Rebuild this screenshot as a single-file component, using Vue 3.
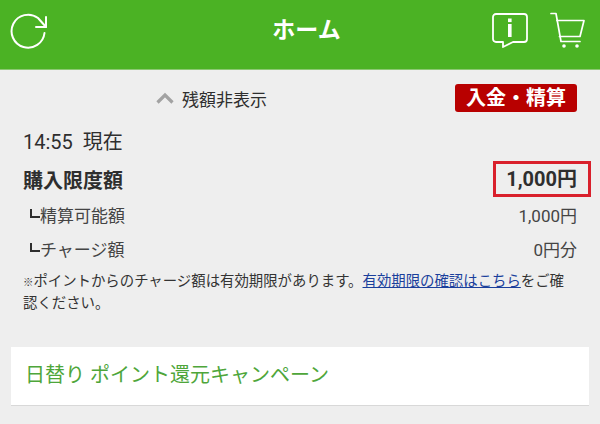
<template>
  <div class="screen">
    <header class="app-bar">
      <svg class="icon-reload" width="40" height="40" viewBox="0 0 40 40" fill="none" stroke="#fff" stroke-width="2" stroke-linecap="round" stroke-linejoin="round">
        <path d="M34.5 22 A16.5 16.5 0 1 1 28 7 L36 16" />
        <path d="M36 6 L36 16 L26 16" />
      </svg>
      <h1 class="title">ホーム</h1>
      <div class="bar-actions">
        <svg width="37" height="36" viewBox="0 0 37 36" fill="none" stroke="#fff" stroke-width="1.8" stroke-linejoin="round">
          <path d="M5 2 H33 A3 3 0 0 1 36 5 V27 A3 3 0 0 1 33 30 H22 L12 35 V30 H5 A3 3 0 0 1 2 27 V5 A3 3 0 0 1 5 2 Z" />
          <rect x="17" y="6.5" width="3.6" height="3.6" fill="#fff" stroke="none" />
          <rect x="17" y="12" width="3.6" height="13" fill="#fff" stroke="none" />
        </svg>
        <svg width="36" height="36" viewBox="0 0 36 36" fill="none" stroke="#fff" stroke-width="1.7" stroke-linejoin="round" stroke-linecap="round">
          <path d="M1 1.5 H6 L11 29.5 H30" />
          <path d="M7 8.5 H34 L30 24.5 H9.5" />
          <circle cx="14" cy="34" r="1.8" fill="#fff" stroke="none" />
          <circle cx="27" cy="34" r="1.8" fill="#fff" stroke="none" />
        </svg>
      </div>
    </header>

    <main class="content">
      <div class="balance-toggle">
        <div class="toggle">
          <svg width="18" height="12" viewBox="0 0 18 12" fill="none" stroke="#a2a2a2" stroke-width="3.2">
            <path d="M1.5 10.5 L9 3 L16.5 10.5" />
          </svg>
          <span>残額非表示</span>
        </div>
        <button class="pay-btn">入金・精算</button>
      </div>

      <div class="time-row">14:55&nbsp; 現在</div>

      <div class="row row-main">
        <span>購入限度額</span>
        <span class="limit-box">1,000円</span>
      </div>
      <div class="row row-sub">
        <span><i class="branch"></i>精算可能額</span>
        <span>1,000円</span>
      </div>
      <div class="row row-sub">
        <span><i class="branch"></i>チャージ額</span>
        <span>0円分</span>
      </div>

      <p class="note"><span class="mark">※</span>ポイントからのチャージ額は有効期限があります。<a class="note-link">有効期限の確認はこちら</a>をご確認ください。</p>

      <div class="campaign">日替り ポイント還元キャンペーン</div>
    </main>
  </div>
</template>

<script setup>
</script>

<style>
html, body {
  margin: 0;
  background: #eeeeee;
}
</style>

<style scoped>
.screen {
  width: 600px;
  height: 424px;
  overflow: hidden;
  background: #eeeeee;
  color: #2e2e2e;
  font-family: Roboto, "Noto Sans CJK JP", sans-serif;
}

.app-bar {
  height: 70px;
  background: #4bb224;
  border-bottom: 1px solid #8cc873;
  box-sizing: border-box;
  display: flex;
  align-items: flex-start;
  justify-content: space-between;
  padding: 11px 14px 0 10px;
  position: relative;
}

.title {
  position: absolute;
  left: 13px;
  right: 0;
  top: 0;
  margin: 0;
  text-align: center;
  color: #fff;
  font-size: 23px;
  font-weight: 700;
  line-height: 62px;
}

.bar-actions {
  display: flex;
  gap: 22px;
  margin-top: 1px;
}

.content {
  padding: 14px 23px 0 23px;
}

.balance-toggle {
  display: flex;
  justify-content: space-between;
  align-items: center;
  height: 28px;
}

.toggle {
  display: flex;
  align-items: center;
  gap: 8px;
  margin-left: 133px;
  font-size: 17px;
}

.pay-btn {
  border: none;
  width: 122px;
  height: 28px;
  padding: 0;
  background: #b80000;
  color: #fff;
  border-radius: 3px;
  font: 700 20px Roboto, "Noto Sans CJK JP", sans-serif;
  line-height: 28px;
}

.time-row {
  font-size: 20px;
  line-height: 28px;
  margin-top: 16px;
}

.row {
  display: flex;
  justify-content: space-between;
  align-items: center;
}

.row-main {
  height: 36px;
  margin-top: 5px;
  font-size: 20px;
  font-weight: 700;
}

.limit-box {
  box-sizing: border-box;
  width: 98px;
  height: 36px;
  margin-right: -14px;
  line-height: 30px;
  border: 3px solid #d9202c;
  padding-right: 11px;
  text-align: right;
}

.row-sub {
  font-size: 17px;
  height: 34px;
  color: #444;
}

.branch {
  display: inline-block;
  width: 10px;
  height: 9px;
  border-left: 2.5px solid #2e2e2e;
  border-bottom: 2.5px solid #2e2e2e;
  box-sizing: border-box;
  margin: 0 0 7px 7px;
  vertical-align: middle;
}

.note {
  margin: 6px 0 0;
  font-size: 14.4px;
  line-height: 21px;
  color: #333;
}

.mark {
  font-size: 10.4px;
}

.note-link {
  color: #1a3f9c;
  text-decoration: underline;
}

.campaign {
  margin: 33px -12px 0;
  height: 59px;
  box-sizing: border-box;
  background: #fff;
  border-bottom: 1px solid #d8d8d8;
  padding-left: 14px;
  line-height: 56px;
  color: #4ea63a;
  font-size: 20px;
}
</style>
